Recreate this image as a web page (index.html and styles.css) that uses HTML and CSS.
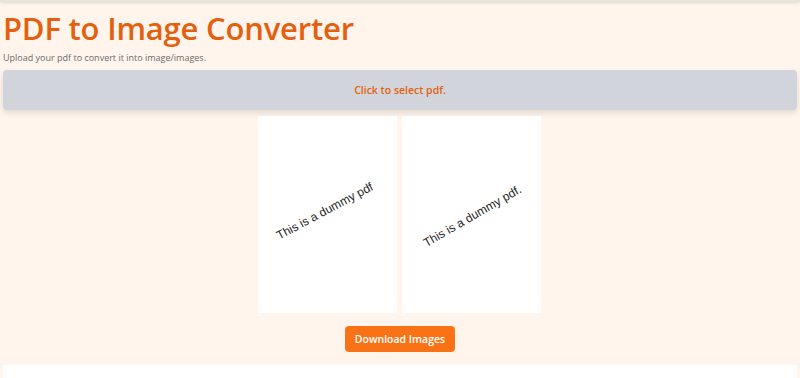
FILE: index.html
```html
<!DOCTYPE html>
<html lang="en">

<head>
    <meta charset="UTF-8">
    <meta name="viewport" content="width=device-width, initial-scale=1.0">
    <title>PDF to Image Converter</title>
    <link rel="stylesheet" href="styles.css">
</head>

<body>
    <div class="topbar"></div>
    <div class="container">
        <h1>PDF to Image Converter</h1>
        <p class="subtitle">Upload your pdf to convert it into image/images.</p>
        <label class="picker">
            <span>Click to select pdf.</span>
        </label>
        <div class="pages">
            <div class="page"><span class="page-text first">This is a dummy pdf</span></div>
            <div class="page"><span class="page-text second">This is a dummy pdf.</span></div>
        </div>
        <div class="actions">
            <button type="button">Download Images</button>
        </div>
        <div class="footer-box"></div>
    </div>
</body>

</html>
```

FILE: styles.css
```css
body {
    font-family: 'Open Sans', 'Noto Sans', sans-serif;
    margin: 0;
    padding: 0;
    background-color: #fff5ec;
    overflow: hidden;
}

.topbar {
    height: 2px;
    background-color: #e8e4e0;
    box-shadow: 0 1px 3px rgba(0, 0, 0, 0.15);
}

.container {
    padding: 0 3px;
}

h1 {
    margin: 6px 0 0;
    color: #e4600f;
    font-size: 31px;
    font-weight: 600;
    line-height: 40px;
    letter-spacing: -0.2px;
}

.subtitle {
    margin: 3px 0 0;
    font-size: 9px;
    color: #6b6b6b;
}

.picker {
    display: flex;
    align-items: center;
    justify-content: center;
    height: 40px;
    margin-top: 6px;
    background-color: #d1d5db;
    border-radius: 4px;
    box-shadow: 0 3px 6px rgba(0, 0, 0, 0.12);
    cursor: pointer;
}

.picker span {
    color: #e4600f;
    font-size: 10.5px;
    font-weight: 600;
}

.pages {
    display: flex;
    justify-content: center;
    gap: 5px;
    margin-top: 6px;
    padding-right: 2px;
}

.page {
    position: relative;
    width: 139px;
    height: 197px;
    background-color: #fff;
}

.page-text {
    position: absolute;
    font-family: 'Liberation Sans', Arial, sans-serif;
    font-size: 12px;
    color: #222;
    white-space: nowrap;
}

.page-text.first {
    left: 13px;
    top: 88px;
    transform: rotate(-28deg);
}

.page-text.second {
    left: 15px;
    top: 93px;
    transform: rotate(-30deg);
}

.actions {
    display: flex;
    justify-content: center;
    margin-top: 13px;
}

button {
    background-color: #f97316;
    color: #fff;
    border: none;
    padding: 0 10px;
    height: 26px;
    border-radius: 4px;
    font-family: 'Open Sans', 'Noto Sans', sans-serif;
    font-size: 10.5px;
    font-weight: 600;
    cursor: pointer;
}

.footer-box {
    margin-top: 13px;
    height: 13px;
    background-color: #fff;
}
```
